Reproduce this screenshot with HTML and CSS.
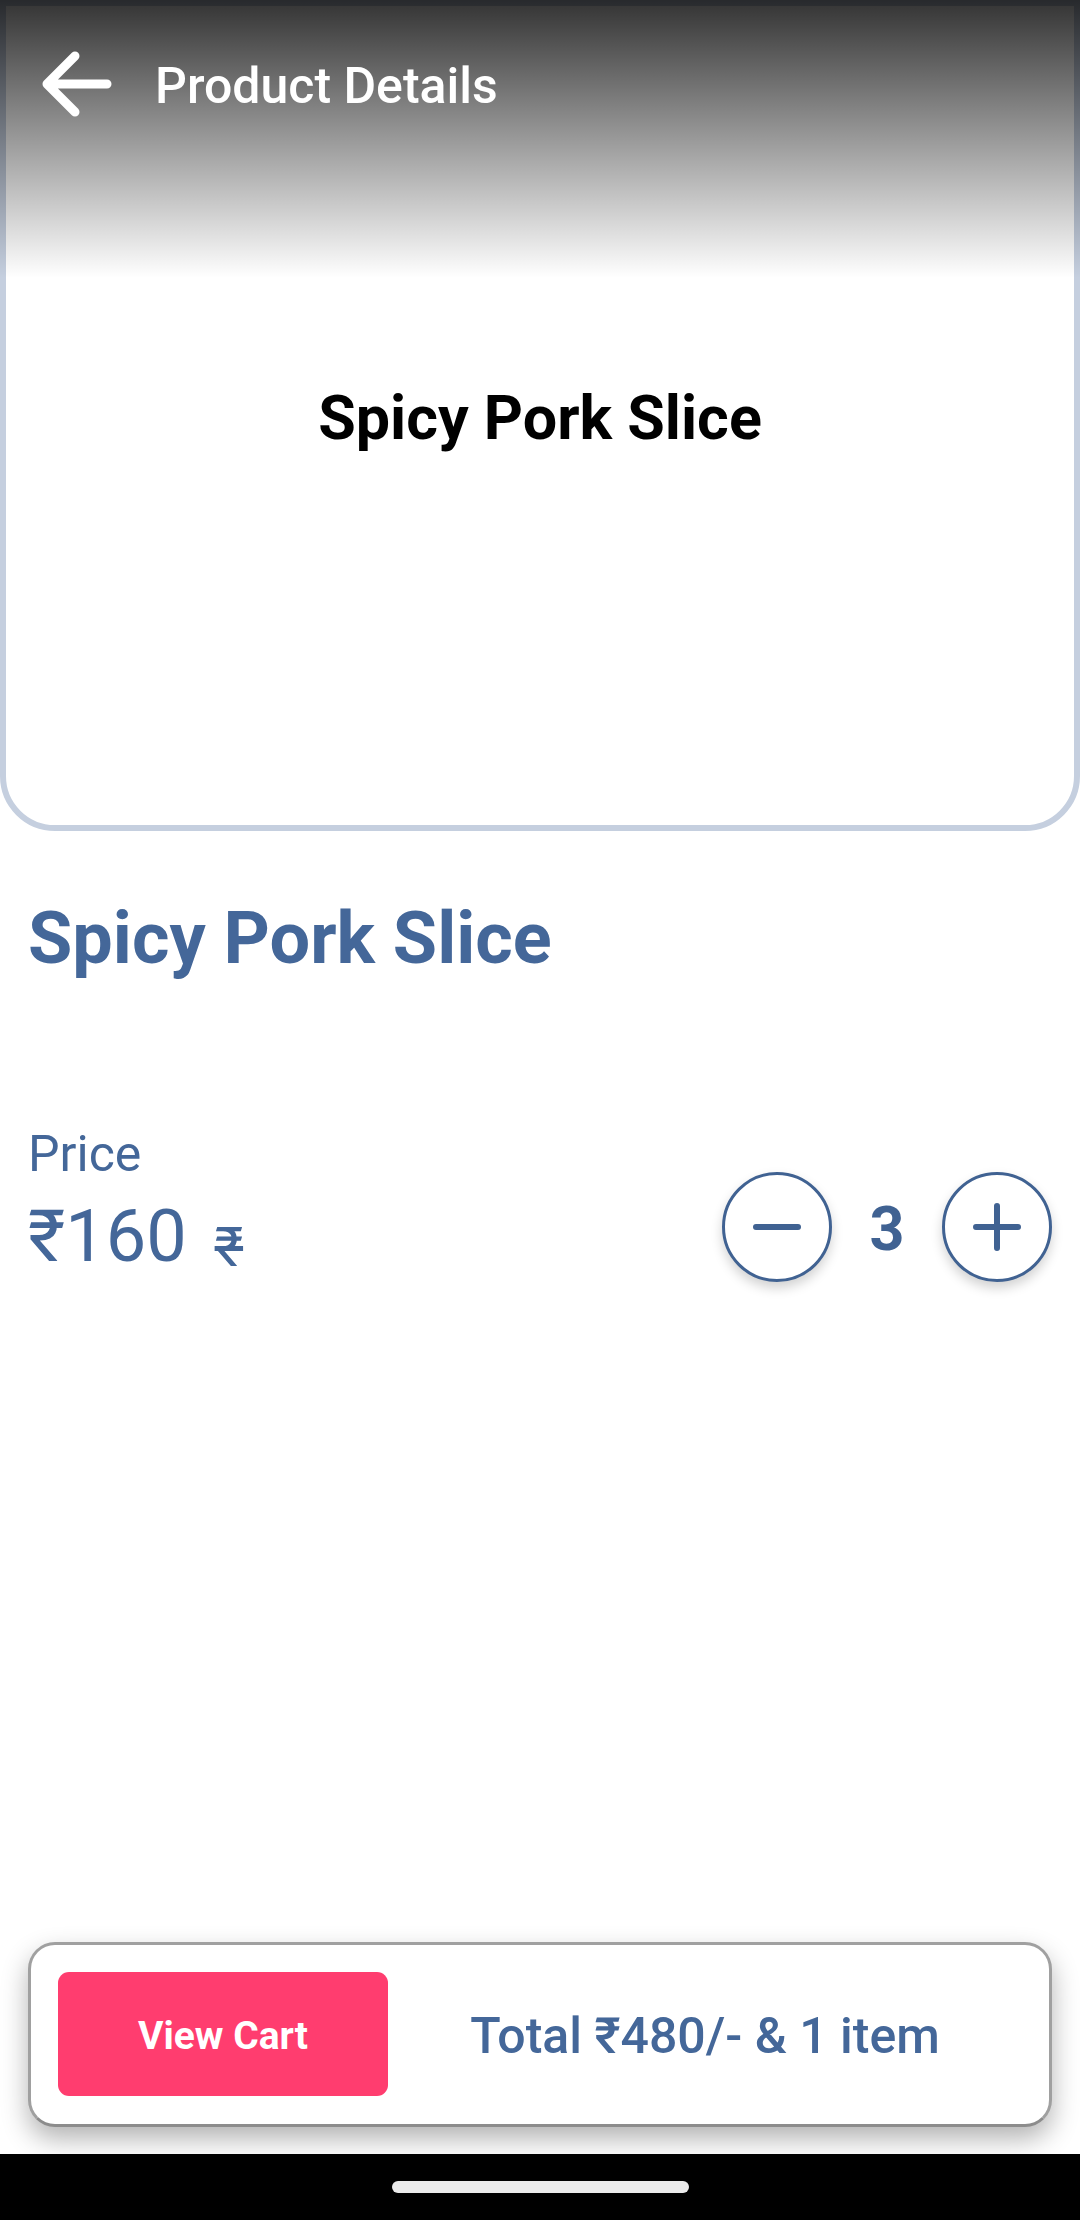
FILE: index.html
```html
<!DOCTYPE html>
<html lang="en">
<head>
<meta charset="utf-8">
<meta name="viewport" content="width=device-width, initial-scale=1">
<title>Product Details</title>
<link rel="stylesheet" href="styles.css">
</head>
<body>
<div class="screen">
  <section class="hero">
    <header class="topbar">
      <button class="back" type="button" aria-label="Back">
        <svg viewBox="0 0 72 72" aria-hidden="true"><path d="M66 36H6M34 8L6 36l28 28"/></svg>
      </button>
      <span class="topbar-title">Product Details</span>
    </header>
    <p class="hero-name">Spicy Pork Slice</p>
  </section>
  <main class="details">
    <h1 class="title">Spicy Pork Slice</h1>
    <div class="purchase">
      <div class="price">
        <span class="price-label">Price</span>
        <div class="price-row">
          <span class="price-now">₹160</span>
          <s class="price-old">₹</s>
        </div>
      </div>
      <div class="stepper">
        <button class="step" type="button" aria-label="Decrease quantity">
          <svg viewBox="0 0 48 48" aria-hidden="true"><path d="M3 24H45"/></svg>
        </button>
        <output class="count">3</output>
        <button class="step" type="button" aria-label="Increase quantity">
          <svg viewBox="0 0 48 48" aria-hidden="true"><path d="M3 24H45M24 3V45"/></svg>
        </button>
      </div>
    </div>
  </main>
  <div class="cart">
    <button class="view-cart" type="button">View Cart</button>
    <span class="total">Total ₹480/- &amp; 1 item</span>
  </div>
  <footer class="navbar"><span class="handle"></span></footer>
</div>
</body>
</html>
```
FILE: styles.css
```css
* {
  box-sizing: border-box;
}

body {
  margin: 0;
  background: #fff;
  color: #446799;
  font-family: Roboto, "Noto Sans", sans-serif;
}

button {
  padding: 0;
  border: 0;
  background: none;
  font: inherit;
  cursor: pointer;
}

.screen {
  display: flex;
  flex-direction: column;
  min-height: 100vh;
}

.hero {
  position: relative;
  display: flex;
  align-items: center;
  justify-content: center;
  min-height: 831px;
  padding-top: 4px;
  border: 6px solid #c5cfdf;
  border-radius: 0 0 55px 55px;
  background: #fff;
}

/* Dark fade laid over the picture, its border included */
.topbar {
  position: absolute;
  inset: -6px -6px auto;
  display: flex;
  align-items: flex-start;
  gap: 42px;
  height: 278px;
  padding: 48px 41px;
  background: linear-gradient(rgba(0, 0, 0, 0.8), rgba(0, 0, 0, 0));
  color: #fff;
}

.back {
  display: flex;
  color: inherit;
}

.back svg {
  width: 72px;
  height: 72px;
}

svg {
  fill: none;
  stroke: currentColor;
  stroke-linecap: round;
  stroke-linejoin: round;
}

.back path {
  stroke-width: 9;
}

.topbar-title {
  font-size: 50px;
  font-weight: 500;
  line-height: 76px;
}

.hero-name {
  margin: 0;
  color: #000;
  font-size: 61px;
  font-weight: 700;
}

.details {
  flex: 1;
  padding: 66px 28px;
}

.title {
  margin: 0 0 144px;
  font-size: 72px;
  font-weight: 700;
  line-height: 84px;
}

.purchase {
  display: flex;
  align-items: flex-end;
  justify-content: space-between;
}

.price {
  display: flex;
  flex-direction: column;
  gap: 12px;
  padding-bottom: 3px;
}

.price-label {
  font-size: 50px;
  line-height: 58px;
}

.price-row {
  display: flex;
  align-items: flex-end;
  gap: 28px;
}

.price-now {
  font-size: 72px;
  line-height: 84px;
}

.price-old {
  font-size: 55px;
  line-height: 64px;
}

.stepper {
  display: flex;
  align-items: center;
  color: #406292;
}

.step {
  display: flex;
  align-items: center;
  justify-content: center;
  width: 110px;
  height: 110px;
  border: 3px solid;
  border-radius: 50%;
  background: #fff;
  box-shadow: 0 6px 12px rgba(0, 0, 0, 0.18);
  color: inherit;
}

.step svg {
  width: 48px;
  height: 48px;
}

.step path {
  stroke-width: 6;
}

.count {
  width: 110px;
  padding-top: 4px;
  font-size: 61px;
  font-weight: 700;
  text-align: center;
}

.cart {
  display: flex;
  align-items: center;
  margin: 0 28px 27px;
  padding: 27px 27px 28px;
  border: 3px solid #a0a0a0;
  border-bottom-color: #8c8c8c;
  border-radius: 27px;
  background: #fff;
  box-shadow: 0 12px 27px rgba(0, 0, 0, 0.3);
}

.view-cart,
.total {
  padding-top: 4px;
}

.view-cart {
  width: 330px;
  height: 124px;
  border-radius: 11px;
  background: #ff3d6f;
  color: #fff;
  font-size: 39px;
  font-weight: 700;
}

.total {
  flex: 1;
  font-size: 50px;
  font-weight: 500;
  text-align: center;
}

.navbar {
  position: relative;
  display: flex;
  align-items: center;
  justify-content: center;
  height: 66px;
  background: #000;
}

.handle {
  width: 297px;
  height: 12px;
  border-radius: 6px;
  background: #ebebeb;
}
```
